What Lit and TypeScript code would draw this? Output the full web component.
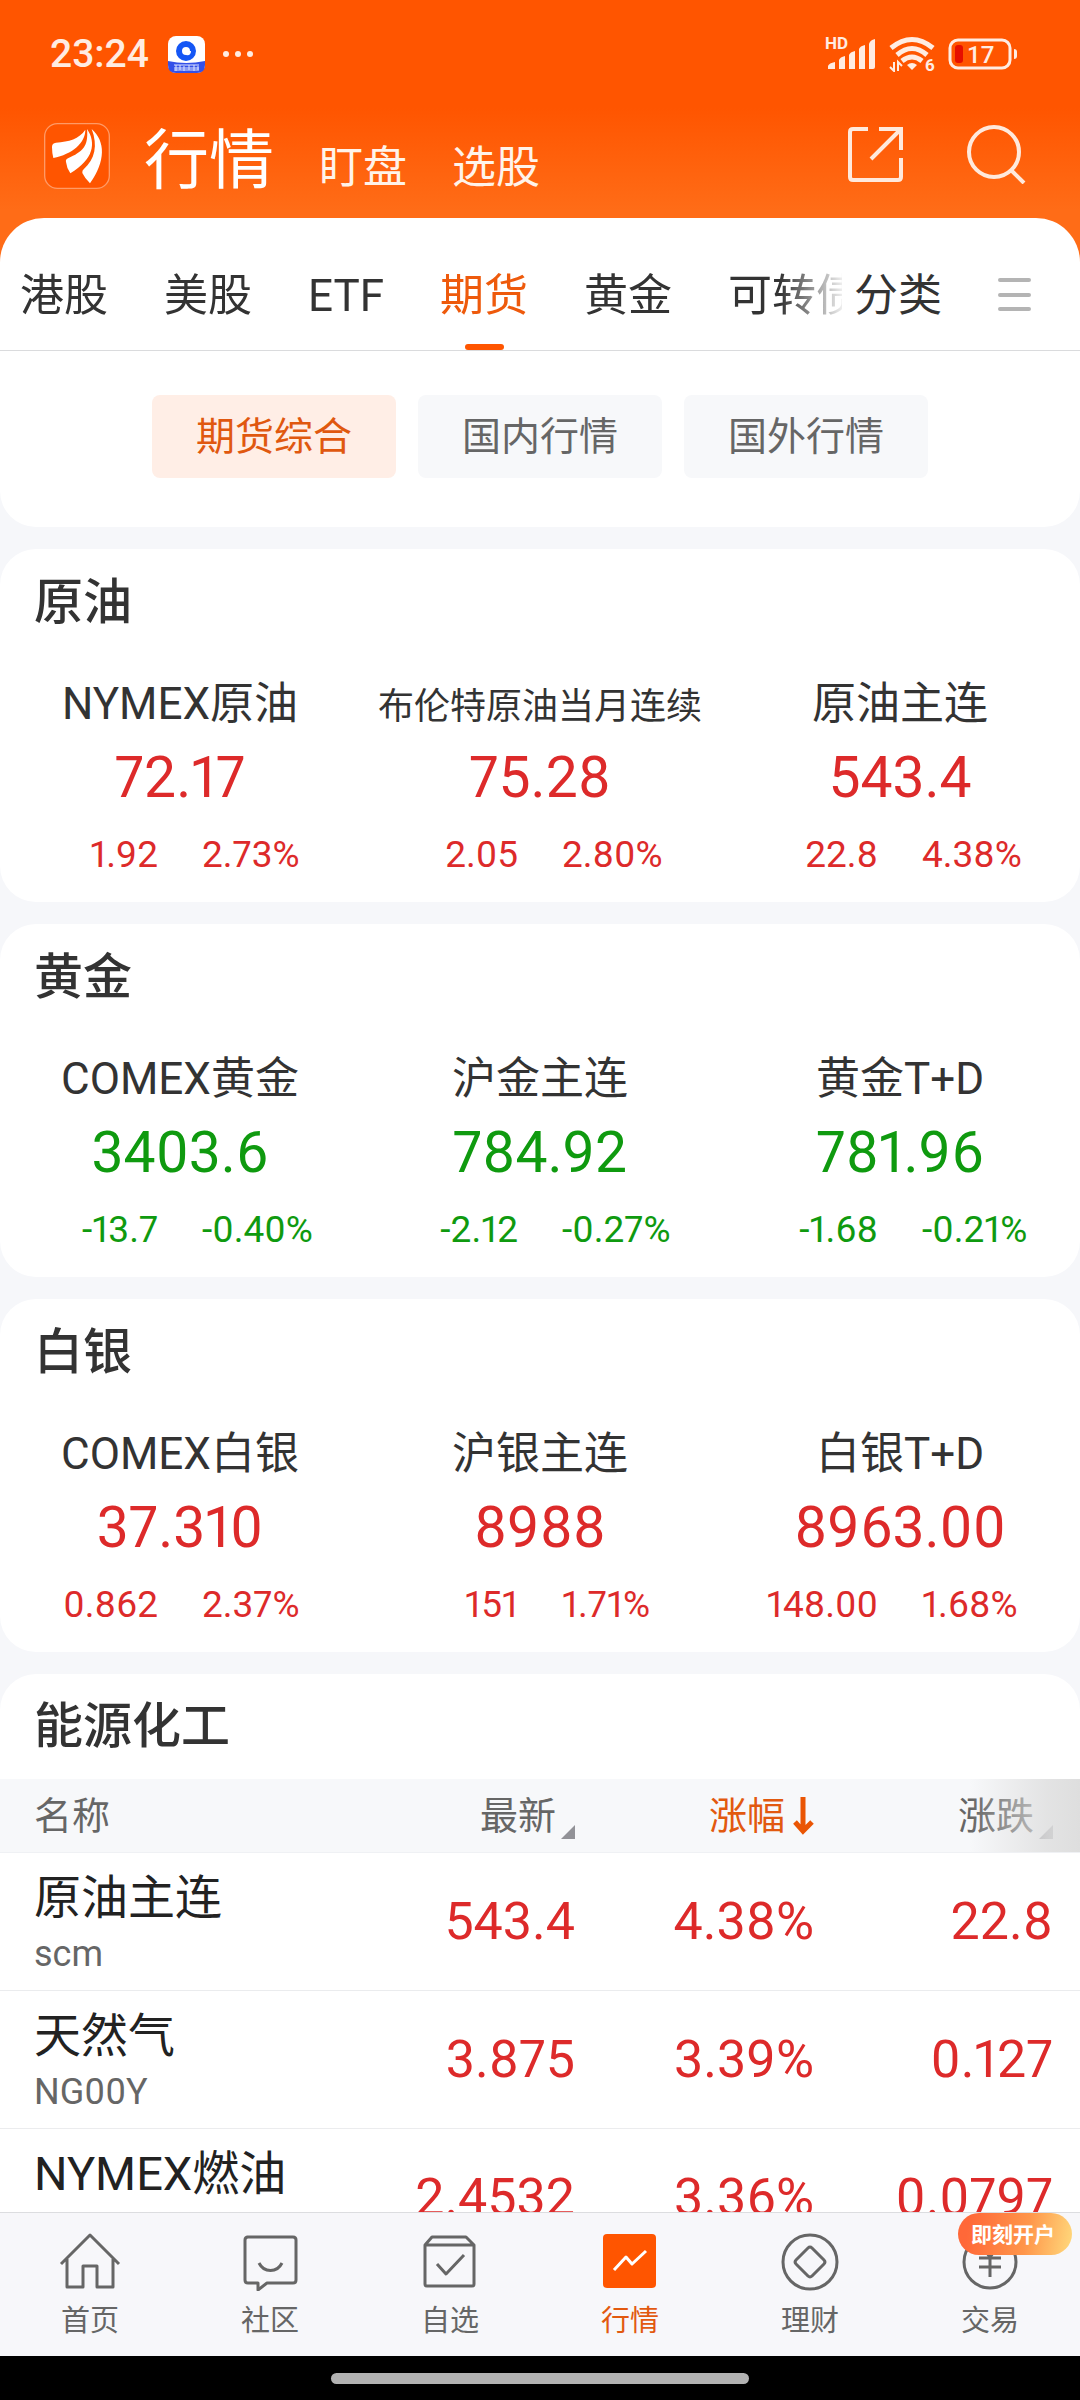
import { LitElement, html, svg, css } from "lit";
import { customElement, property, state } from "lit/decorators.js";
import { classMap } from "lit/directives/class-map.js";

type Quote = { name: string; price: string; diff: string; pct: string; small?: boolean };
type Group = { title: string; down?: boolean; quotes: Quote[] };

const groups: Group[] = [
  {
    title: "原油",
    quotes: [
      { name: "NYMEX原油", price: "72.17", diff: "1.92", pct: "2.73%" },
      { name: "布伦特原油当月连续", price: "75.28", diff: "2.05", pct: "2.80%", small: true },
      { name: "原油主连", price: "543.4", diff: "22.8", pct: "4.38%" },
    ],
  },
  {
    title: "黄金",
    down: true,
    quotes: [
      { name: "COMEX黄金", price: "3403.6", diff: "-13.7", pct: "-0.40%" },
      { name: "沪金主连", price: "784.92", diff: "-2.12", pct: "-0.27%" },
      { name: "黄金T+D", price: "781.96", diff: "-1.68", pct: "-0.21%" },
    ],
  },
  {
    title: "白银",
    quotes: [
      { name: "COMEX白银", price: "37.310", diff: "0.862", pct: "2.37%" },
      { name: "沪银主连", price: "8988", diff: "151", pct: "1.71%" },
      { name: "白银T+D", price: "8963.00", diff: "148.00", pct: "1.68%" },
    ],
  },
];

const rows = [
  { name: "原油主连", code: "scm", last: "543.4", pct: "4.38%", diff: "22.8" },
  { name: "天然气", code: "NG00Y", last: "3.875", pct: "3.39%", diff: "0.127" },
  { name: "NYMEX燃油", code: "", last: "2.4532", pct: "3.36%", diff: "0.0797" },
];

const tabs = ["港股", "美股", "ETF", "期货", "黄金", "可转债"];
const scopes = ["期货综合", "国内行情", "国外行情"];

const navIcons = [
  svg`<path d="M2 31 31 2 60 31M8 26V54H24V33H38V54H54V26"/>`,
  svg`<path d="M8 4H54Q57 4 57 7V47Q57 50 54 50H28L19 57V50H9Q6 50 6 47V7Q6 4 9 4Z"/><path d="M20 30C25 40 38 40 43 30"/>`,
  svg`<path d="M6 12 13 4H47L55 12V51Q55 53 53 53H8Q6 53 6 51ZM6 12H55"/><path d="M18 31 27 41 45 22"/>`,
  svg`<rect x="4" y="1" width="53" height="54" rx="4" fill="#ff5500" stroke="none"/><path stroke="#fff" d="M15 37 27 24 33 31 47 18"/>`,
  svg`<circle cx="31" cy="29" r="27"/><path d="M29 15Q31 13 33 15L45 27Q47 29 45 31L33 43Q31 45 29 43L17 31Q15 29 17 27Z"/>`,
  svg`<circle cx="31" cy="29" r="26"/><path d="M22 12 31 24 40 12M31 24V44M20 25H42M20 34H42"/>`,
];
const navLabels = ["首页", "社区", "自选", "行情", "理财", "交易"];

@customElement("status-bar")
class StatusBar extends LitElement {
  static styles = css`
    :host { display: flex; align-items: center; height: 108px; padding: 0 62px 0 50px; color: #ffece2; }
    .time { font-size: 39px; font-weight: 500; line-height: 48px; }
    .app { margin-left: 19px; }
    .dots { margin-left: 17px; }
    .right { margin-left: auto; display: flex; align-items: center; gap: 13px; }
    svg { display: block; }
  `;
  render() {
    return html`
      <span class="time">23:24</span>
      <svg class="app" width="37" height="37" viewBox="0 0 37 37" aria-hidden="true">
        <rect width="37" height="37" rx="8" fill="#fff" />
        <path d="M0 25Q18 29 37 25V29Q37 37 29 37H8Q0 37 0 29Z" fill="#3450e8" />
        <circle cx="18" cy="15" r="7" fill="none" stroke="#1456f5" stroke-width="6" />
        <path d="M18 15H23Q23 20 18 19Z" fill="#fff" />
        <path d="M6 29H31M6 32H31M6 34H31M8 29V35M12 29V34M16 30V35M21 29V34M26 29V35M30 30V34" stroke="#dfe6ff" stroke-width="1" />
      </svg>
      <svg class="dots" width="32" height="8" viewBox="0 0 32 8" aria-hidden="true">
        <g fill="#ffece2"><circle cx="4" cy="4" r="3" /><circle cx="16" cy="4" r="3" /><circle cx="28" cy="4" r="3" /></g>
      </svg>
      <div class="right">
        <svg width="51" height="36" viewBox="0 0 51 36" aria-hidden="true" fill="#ffece2">
          <text x="0" y="13" font-size="17" font-weight="700">HD</text>
          <path d="M3 33V30Q4 27 10 26V33ZM14 33V24Q15 21 20 20V33ZM24 33V19Q25 16 30 15V33ZM34 33V13Q35 10 40 9V33ZM44 33V8Q45 4 50 3V31Q50 33 48 33Z" />
        </svg>
        <svg width="46" height="36" viewBox="0 0 46 36" aria-hidden="true">
          <g fill="none" stroke="#ffece2" stroke-width="5">
            <path d="M2 12Q23-5 44 12" /><path d="M8 19Q23 6 38 19" /><path d="M13 25Q23 17 33 25" />
          </g>
          <path d="M23 34 18 29Q23 25 28 29Z" fill="#ffece2" />
          <path d="M5 26V35L1 31M9 35V26L13 30" fill="none" stroke="#ffece2" stroke-width="2" />
          <text x="36" y="35" fill="#ffece2" font-size="17" font-weight="700">6</text>
        </svg>
        <svg width="70" height="32" viewBox="0 0 70 32" role="img" aria-label="17%">
          <rect x="2" y="2" width="60" height="28" rx="8" fill="none" stroke="#ffece2" stroke-width="3" />
          <rect x="7" y="7" width="8" height="18" rx="3" fill="#e60f00" />
          <path d="M66 11Q69 11 69 14V18Q69 21 66 21Z" fill="#ffece2" />
          <text x="19" y="25" fill="#ffece2" font-size="24" font-weight="500">17</text>
        </svg>
      </div>
    `;
  }
}

@customElement("title-bar")
class TitleBar extends LitElement {
  static styles = css`
    :host { display: flex; align-items: center; height: 110px; padding: 0 54px 0 44px; box-sizing: border-box; color: #fff; }
    .logo { display: block; margin-top: -14px; }
    nav { display: flex; align-items: baseline; margin-left: 34px; gap: 45px; padding-top: 2px; }
    a { color: #fff3ea; font-size: 44px; line-height: 80px; text-decoration: none; }
    .main { color: #fff; font-size: 65px; }
    .tools { margin: -18px 0 0 auto; display: flex; align-items: center; gap: 63px; }
    button { border: 0; padding: 0; background: none; display: block; }
    svg { display: block; }
  `;
  render() {
    return html`
      <svg class="logo" width="66" height="66" viewBox="0 0 198 198" role="img" aria-label="东方财富">
        <rect x="2" y="2" width="194" height="194" rx="38" fill="#ff5500" stroke="#ff9a66" stroke-width="4" />
        <g fill="#fff">
          <path d="M124 20C124 60 85 93 28 105Q24 90 24 72Q24 60 36 59C75 56 105 48 124 20Z" />
          <path d="M129 18C158 60 148 110 79 151Q68 135 66 117Q64 110 72 106C116 86 134 70 129 18Z" />
          <path d="M143 18C185 55 185 115 138 181Q122 165 115 150Q114 143 119 139C153 108 162 68 143 18Z" />
        </g>
      </svg>
      <nav>
        <a class="main" href="#market">行情</a>
        <a href="#watch">盯盘</a>
        <a href="#pick">选股</a>
      </nav>
      <div class="tools">
        <button aria-label="分享">
          <svg width="56" height="58" viewBox="0 0 56 58" fill="none" stroke="#ffe9dc" stroke-width="4">
            <path d="M21 4H6Q3 4 3 7V52Q3 55 6 55H51Q54 55 54 52V33M32 4H54V25M54 4 24 34" />
          </svg>
        </button>
        <button aria-label="搜索">
          <svg width="60" height="60" viewBox="0 0 60 60" fill="none" stroke="#ffe9dc" stroke-width="4">
            <circle cx="28" cy="28" r="25" /><path d="M45 46 58 59" />
          </svg>
        </button>
      </div>
    `;
  }
}

@customElement("quote-group")
class QuoteGroup extends LitElement {
  @property({ attribute: false }) group!: Group;
  static styles = css`
    :host { display: block; background: #fff; border-radius: 36px; padding: 19px 0 23px; font-variant-numeric: proportional-nums; }
    h2 { margin: 0 0 36px; padding: 0 34px; font-size: 49px; line-height: 70px; font-weight: 500; color: #333; }
    .grid { display: grid; grid-template-columns: repeat(3, 1fr); }
    .cell { display: flex; flex-direction: column; align-items: center; color: #dd2a2a; }
    .down { color: #0f9a0f; }
    .name { font-size: 44px; line-height: 60px; color: #333; }
    .small { font-size: 36px; line-height: 40px; }
    .price { margin-top: 8px; font-size: 57px; line-height: 72px; }
    .change { align-self: stretch; display: grid; grid-template-columns: 1fr 1fr; gap: 44px; margin-top: 17px; font-size: 37px; line-height: 48px; white-space: nowrap; }
    .diff { text-align: right; }
  `;
  render() {
    const { title, down, quotes } = this.group;
    return html`
      <h2>${title}</h2>
      <div class="grid">
        ${quotes.map(
          (q) => html`
            <div class=${classMap({ cell: true, down: !!down })}>
              <div class="name"><span class=${classMap({ small: !!q.small })}>${q.name}</span></div>
              <div class="price">${q.price}</div>
              <div class="change"><span class="diff">${q.diff}</span><span>${q.pct}</span></div>
            </div>
          `
        )}
      </div>
    `;
  }
}

@customElement("bottom-nav")
class BottomNav extends LitElement {
  static styles = css`
    :host { display: block; }
    nav { display: grid; grid-template-columns: repeat(6, 1fr); border-top: 1px solid #dcdde0; background: #f7f7fa; height: 143px; }
    a { position: relative; display: flex; flex-direction: column; align-items: center; gap: 10px; padding-top: 20px; box-sizing: border-box; color: #666; font-size: 29px; line-height: 40px; text-decoration: none; }
    .on { color: #e2590f; }
    svg { display: block; fill: none; stroke: #666; stroke-width: 3; stroke-linejoin: round; }
    .badge { position: absolute; top: 0; right: 8px; width: 114px; height: 42px; box-sizing: border-box; padding-left: 13px; border-radius: 21px; background: linear-gradient(100deg, #ff6838 10%, #ff964a 60%, #ffd67a 98%); color: #fff; font-size: 21px; font-weight: 700; line-height: 44px; white-space: nowrap; }
    .gesture { display: flex; justify-content: center; padding: 17px 0 16px; background: #000; }
    .pill { width: 418px; height: 11px; border-radius: 6px; background: #b2b2b2; }
  `;
  render() {
    return html`
      <nav>
        ${navLabels.map(
          (label, i) => html`
            <a href="#tab-${i}" class=${classMap({ on: i === 3 })}>
              <svg width="62" height="58" viewBox="0 0 62 58" aria-hidden="true">${navIcons[i]}</svg>
              ${label}
              ${i === 5 ? html`<span class="badge">即刻开户</span>` : ""}
            </a>
          `
        )}
      </nav>
      <div class="gesture"><div class="pill"></div></div>
    `;
  }
}

@customElement("app-root")
class AppRoot extends LitElement {
  @state() private tab = 3;
  @state() private scope = 0;
  static styles = css`
    :host { display: flex; flex-direction: column; height: 100vh; overflow: hidden; background: #f6f7fa; font-family: Roboto, "Noto Sans CJK SC", sans-serif; font-weight: 400; color: #333; }
    .top { background: linear-gradient(#ff5500 0, #ff5500 108px, #ff6c17 210px); }
    .panel { background: #fff; border-radius: 44px 44px 36px 36px; }
    .under { background: linear-gradient(#ff6c17 50%, #f6f7fa 50%); }
    button { border: 0; margin: 0; padding: 0; background: none; font: inherit; color: inherit; }
    .tabs { display: flex; align-items: center; height: 132px; border-bottom: 1px solid #dadbdd; }
    .strip { display: flex; gap: 56px; width: 822px; padding-left: 20px; box-sizing: content-box; overflow: hidden; -webkit-mask-image: linear-gradient(90deg, #000 780px, transparent 848px); mask-image: linear-gradient(90deg, #000 780px, transparent 848px); }
    .tab { display: flex; flex-direction: column; align-items: center; flex: none; font-size: 44px; line-height: 60px; padding-top: 48px; }
    .tab::after { content: ""; width: 39px; height: 6px; margin-top: 18px; border-radius: 3px; }
    .on { color: #ee5a0c; }
    .on::after { background: #ff5500; }
    .all { margin-left: 12px; font-size: 44px; line-height: 60px; padding-top: 24px; flex: none; }
    .menu { margin-left: auto; margin-right: 49px; padding-top: 22px; }
    svg { display: block; }
    .scopes { display: flex; justify-content: center; gap: 22px; padding: 44px 0 49px; }
    .scope { width: 244px; height: 83px; border-radius: 8px; background: #f7f8fa; color: #666; font-size: 39px; line-height: 84px; }
    .chosen { background: #ffeee6; color: #e0580f; }
    main { flex: 1; min-height: 0; overflow: hidden; display: flex; flex-direction: column; gap: 22px; padding-top: 22px; }
    quote-group, .list { flex: none; }
    .list { background: #fff; border-radius: 36px 36px 0 0; }
    h2 { margin: 0; padding: 18px 34px 17px; font-size: 49px; line-height: 70px; font-weight: 500; color: #333; }
    .wrap { position: relative; }
    .fade { position: absolute; top: 0; right: 0; width: 110px; height: 73px; background: linear-gradient(90deg, rgba(222, 222, 222, 0), rgba(222, 222, 222, 0.8) 70%, #dedede); pointer-events: none; }
    table { width: 100%; table-layout: fixed; border-collapse: separate; border-spacing: 0; font-variant-numeric: proportional-nums; }
    th, td { box-sizing: border-box; padding: 0 27px 0 0; font-weight: 400; text-align: right; }
    th { height: 74px; background: #f7f8fa; border-bottom: 1px solid #eff1f4; color: #666; font-size: 38px; line-height: 56px; }
    .num { width: 239px; }
    .first { padding: 0 0 0 34px; text-align: left; }
    .sort { display: inline-flex; align-items: center; vertical-align: top; gap: 5px; line-height: 56px; }
    .corner { align-self: flex-end; margin-bottom: 5px; }
    .sorted { color: #e2590f; gap: 8px; }
    td { height: 138px; border-bottom: 1px solid #ebecee; color: #dd2a2a; font-size: 52px; line-height: 64px; }
    .pname { padding-top: 4px; color: #222; font-size: 47px; line-height: 56px; }
    .code { margin-top: 4px; min-height: 48px; color: #666; font-size: 36px; line-height: 48px; }
  `;
  render() {
    const corner = html`<svg class="corner" width="14" height="14" viewBox="0 0 14 14" aria-hidden="true"><path d="M14 0V14H0Z" fill="#929297" /></svg>`;
    return html`
      <header class="top">
        <status-bar></status-bar>
        <title-bar></title-bar>
      </header>
      <div class="under">
        <section class="panel">
          <div class="tabs">
            <div class="strip">
              ${tabs.map(
                (t, i) => html`<button class=${classMap({ tab: true, on: i === this.tab })} @click=${() => (this.tab = i)}>${t}</button>`
              )}
            </div>
            <button class="all">分类</button>
            <button class="menu" aria-label="菜单">
              <svg width="33" height="34" viewBox="0 0 33 34" stroke="#b4b4b4" stroke-width="4" stroke-linecap="round"><path d="M2 2H31M2 17H31M2 31H31" /></svg>
            </button>
          </div>
          <div class="scopes">
            ${scopes.map(
              (s, i) => html`<button class=${classMap({ scope: true, chosen: i === this.scope })} @click=${() => (this.scope = i)}>${s}</button>`
            )}
          </div>
        </section>
      </div>
      <main>
        ${groups.map((g) => html`<quote-group .group=${g}></quote-group>`)}
        <section class="list">
          <h2>能源化工</h2>
          <div class="wrap">
            <table>
              <thead>
                <tr>
                  <th class="first">名称</th>
                  <th class="num"><button class="sort">最新${corner}</button></th>
                  <th class="num">
                    <button class="sort sorted">涨幅<svg width="21" height="38" viewBox="0 0 21 38" fill="none" stroke="#ea5504" stroke-width="5" aria-hidden="true"><path d="M10 0V34M2 25 10 34 19 25" /></svg></button>
                  </th>
                  <th class="num"><button class="sort">涨跌${corner}</button></th>
                </tr>
              </thead>
              <tbody>
                ${rows.map(
                  (r) => html`
                    <tr>
                      <td class="first"><div class="pname">${r.name}</div><div class="code">${r.code}</div></td>
                      <td>${r.last}</td>
                      <td>${r.pct}</td>
                      <td>${r.diff}</td>
                    </tr>
                  `
                )}
              </tbody>
            </table>
            <div class="fade"></div>
          </div>
        </section>
      </main>
      <bottom-nav></bottom-nav>
    `;
  }
}
